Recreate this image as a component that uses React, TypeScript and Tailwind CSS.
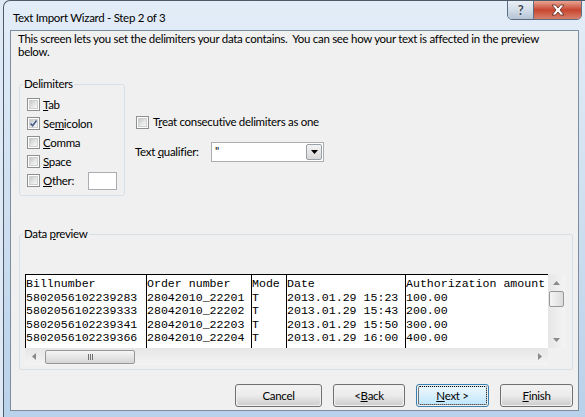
import React from 'react';

const CheckBox = ({ checked }: { checked?: boolean }) => (
    <span className="w-[13px] h-[13px] shrink-0 border border-[#8e8f8f] bg-white p-[1px] flex">
        <span className="relative flex-1 bg-gradient-to-br from-[#c4c6c9] via-[#e4e4e5] to-[#f7f7f7] border border-[#cfd0d1]">
            {checked && (
                <svg viewBox="0 0 9 9" className="absolute -left-[1px] -top-[1px] w-[9px] h-[9px]">
                    <path d="M1.5 4.5 L3.6 6.8 L7.6 1.4" fill="none" stroke="#4a5f8e" strokeWidth="1.6" />
                </svg>
            )}
        </span>
    </span>
);

const GroupBox = ({ label, className, children }: { label: React.ReactNode; className: string; children?: React.ReactNode }) => (
    <div className={`relative border border-[#d5dfe5] rounded-[3px] ${className}`}>
        <span className="absolute left-[3px] -top-[8px] px-[1px] bg-[#f0f0f0] leading-[14px]">{label}</span>
        {children}
    </div>
);

const Button = ({ children, primary, className = '' }: { children: React.ReactNode; primary?: boolean; className?: string }) => (
    <div
        className={`h-[23px] rounded-[3px] border flex p-[1px] ${primary ? 'border-[#3c7fb1]' : 'border-[#707070]'} ${className}`}
    >
        <div
            className={`flex-1 rounded-[2px] flex items-center justify-center ${
                primary
                    ? 'bg-gradient-to-b from-[#eaf6fd] via-[#d9f0fc] to-[#bee6fd] border border-dotted border-black'
                    : 'bg-gradient-to-b from-[#f2f2f2] via-[#ebebeb] to-[#cfcfcf]'
            }`}
        >
            {children}
        </div>
    </div>
);

const columns = [
    { w: 'w-[121px]', rows: ['Billnumber', '5802056102239283', '5802056102239333', '5802056102239341', '5802056102239366'] },
    { w: 'w-[105px]', rows: ['Order number', '28042010_22201', '28042010_22202', '28042010_22203', '28042010_22204'] },
    { w: 'w-[35px]', rows: ['Mode', 'T', 'T', 'T', 'T'] },
    { w: 'w-[119px]', rows: ['Date', '2013.01.29 15:23', '2013.01.29 15:43', '2013.01.29 15:50', '2013.01.29 16:00'] },
    { w: 'w-[143px]', rows: ['Authorization amount', '100.00', '200.00', '300.00', '400.00'] },
];

const Arrow = ({ dir }: { dir: 'up' | 'down' | 'left' | 'right' }) => {
    const d = {
        up: 'M0 4 L3.5 0 L7 4 Z',
        down: 'M0 0 L7 0 L3.5 4 Z',
        left: 'M4 0 L4 7 L0 3.5 Z',
        right: 'M0 0 L0 7 L4 3.5 Z',
    }[dir];
    const vert = dir === 'up' || dir === 'down';
    return (
        <svg viewBox={vert ? '0 0 7 4' : '0 0 4 7'} className={vert ? 'w-[7px] h-[4px]' : 'w-[4px] h-[7px]'}>
            <path d={d} fill="#8a8a8a" />
        </svg>
    );
};

export default function App() {
    return (
        <div className="w-[585px] h-[417px] bg-[#dfe9f5] flex font-[family-name:Lato,sans-serif] text-[11.5px] tracking-[-0.3px] text-black">
            <div className="ml-[3px] flex-1 flex flex-col border-l border-t border-[#4c5a6a] rounded-tl-[7px] bg-gradient-to-b from-[#e3edf8] via-[#cfdff0] to-[#b9d1ea] overflow-hidden">
                {/* title bar */}
                <div className="h-[29px] flex items-start shrink-0">
                    <span className="ml-[9px] mt-[10px] leading-[14px]">Text Import Wizard - Step 2 of 3</span>
                    <div className="ml-auto mr-[3px] flex h-[20px] -mt-[1px] border border-[#5d6d80] rounded-b-[5px] overflow-hidden">
                        <div className="w-[26px] bg-gradient-to-b from-[#e8eef5] via-[#d3dde9] to-[#b4c3d4] flex items-center justify-center border-r border-[#5d6d80]">
                            <span className="font-bold text-[13px] leading-none text-[#3b4655] [text-shadow:0_0_2px_white]">?</span>
                        </div>
                        <div className="w-[47px] bg-gradient-to-b from-[#e8a493] via-[#c7452f] to-[#d6806b] flex items-center justify-center">
                            <svg viewBox="0 0 14 12" className="w-[14px] h-[12px]">
                                <path
                                    d="M1 1 H4.5 L7 4 L9.5 1 H13 L9 6 L13 11 H9.5 L7 8 L4.5 11 H1 L5 6 Z"
                                    fill="white"
                                    stroke="#5a2a22"
                                    strokeWidth="0.8"
                                />
                            </svg>
                        </div>
                    </div>
                </div>

                {/* client area */}
                <div className="ml-[6px] mr-[6px] mb-[6px] flex-1 border border-[#7d8da0] bg-[#f0f0f0] flex flex-col">
                    <p className="ml-[7px] mt-[1px] w-[545px] leading-[13px]">
                        This screen lets you set the delimiters your data contains.&nbsp; You can see how your text is affected in the preview below.
                    </p>

                    <div className="flex mt-[26px] ml-[8px]">
                        <GroupBox label="Delimiters" className="w-[106px] h-[112px] pt-[10px] pl-[7px] pr-[7px] flex flex-col">
                            {[
                                [<u key="t">T</u>, 'ab'],
                                ['Se', <u key="m">m</u>, 'icolon'],
                                [<u key="c">C</u>, 'omma'],
                                [<u key="s">S</u>, 'pace'],
                            ].map((parts, i) => (
                                <div key={i} className="h-[19px] flex items-center gap-[3px]">
                                    <CheckBox checked={i === 1} />
                                    <span>{parts}</span>
                                </div>
                            ))}
                            <div className="h-[19px] flex items-center gap-[3px]">
                                <CheckBox />
                                <span>
                                    <u>O</u>ther:
                                </span>
                                <span className="ml-auto w-[29px] h-[18px] bg-white border border-[#abadb3]" />
                            </div>
                        </GroupBox>

                        <div className="ml-[11px] flex flex-col">
                            <div className="mt-[31px] h-[14px] flex items-center gap-[4px]">
                                <CheckBox />
                                <span>
                                    T<u>r</u>eat consecutive delimiters as one
                                </span>
                            </div>
                            <div className="mt-[13px] -ml-[1px] flex items-center">
                                <span className="w-[76px]">
                                    Text <u>q</u>ualifier:
                                </span>
                                <div className="w-[113px] h-[20px] bg-white border border-[#abadb3] flex">
                                    <span className="flex-1 pl-[3px] leading-[16px]">"</span>
                                    <div className="w-[16px] m-[1px] border border-[#9aa0a8] rounded-[2px] bg-gradient-to-b from-[#f3f3f3] to-[#d8d8d8] flex items-center justify-center">
                                        <svg viewBox="0 0 7 4" className="w-[7px] h-[4px]">
                                            <path d="M0 0 L7 0 L3.5 4 Z" fill="black" />
                                        </svg>
                                    </div>
                                </div>
                            </div>
                        </div>
                    </div>

                    <GroupBox
                        label={
                            <>
                                Data <u>p</u>review
                            </>
                        }
                        className="mt-[38px] ml-[8px] w-[554px] h-[136px] pt-[39px] pl-[5px]"
                    >
                        <div className="w-[540px] h-[91px] flex flex-col">
                            <div className="h-[74px] flex">
                                <div className="w-[523px] bg-white border-t border-l border-black flex overflow-hidden font-[family-name:Liberation_Mono,Courier_New,monospace] text-[11.6px] tracking-normal leading-[13.5px]">
                                    {columns.map((c, i) => (
                                        <div key={i} className={`${c.w} shrink-0 border-r border-black pt-[2px] whitespace-pre overflow-hidden`}>
                                            {c.rows.map((r, j) => (
                                                <div key={j}>{r}</div>
                                            ))}
                                        </div>
                                    ))}
                                </div>
                                <div className="w-[17px] bg-gradient-to-r from-[#e6e6e6] to-[#f4f4f4] flex flex-col items-center">
                                    <div className="h-[17px] flex items-center justify-center">
                                        <Arrow dir="up" />
                                    </div>
                                    <div className="w-[15px] h-[16px] rounded-[2px] border border-[#979797] bg-gradient-to-r from-[#f5f5f5] to-[#dcdcdc]" />
                                    <div className="mt-auto h-[17px] flex items-center justify-center">
                                        <Arrow dir="down" />
                                    </div>
                                </div>
                            </div>
                            <div className="h-[17px] flex">
                                <div className="w-[523px] bg-gradient-to-b from-[#e6e6e6] to-[#f4f4f4] flex items-center">
                                    <div className="w-[17px] flex justify-center">
                                        <Arrow dir="left" />
                                    </div>
                                    <div className="ml-[3px] w-[90px] h-[14px] rounded-[2px] border border-[#979797] bg-gradient-to-b from-[#f5f5f5] to-[#d6d6d6] flex items-center justify-center gap-[1px]">
                                        <span className="w-[1px] h-[6px] bg-[#707070]" />
                                        <span className="w-[1px] h-[6px] bg-[#707070]" />
                                        <span className="w-[1px] h-[6px] bg-[#707070]" />
                                    </div>
                                    <div className="ml-auto w-[17px] flex justify-center">
                                        <Arrow dir="right" />
                                    </div>
                                </div>
                                <div className="w-[17px] bg-[#f0f0f0]" />
                            </div>
                        </div>
                    </GroupBox>

                    <div className="mt-[14px] mr-[5px] flex justify-end gap-[11px]">
                        <Button className="w-[87px]">Cancel</Button>
                        <Button className="w-[72px]">
                            &lt; <u>B</u>ack
                        </Button>
                        <Button className="w-[73px]" primary>
                            <u>N</u>ext &gt;
                        </Button>
                        <Button className="w-[73px]">
                            <u>F</u>inish
                        </Button>
                    </div>
                </div>
            </div>
        </div>
    );
}
